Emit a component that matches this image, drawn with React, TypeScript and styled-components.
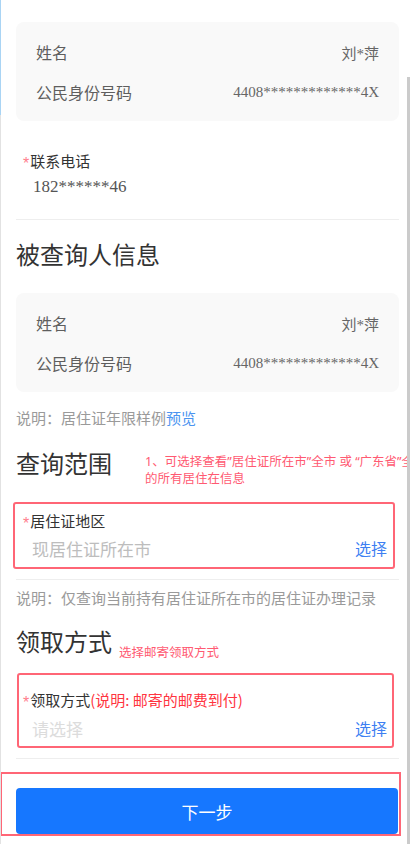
import React from "react";
import styled, { createGlobalStyle } from "styled-components";

const Global = createGlobalStyle`
  html, body { margin: 0; padding: 0; background: #fff; overflow-x: hidden; }
  body { font-family: "Noto Sans CJK SC", "Noto Sans", sans-serif; }
  * { box-sizing: border-box; }
`;

const Page = styled.div`
  width: 410px;
  overflow: hidden;
  padding: 22px 11px 9px 16px;
  display: flex;
  flex-direction: column;
`;

const EdgeLine = styled.div`
  position: fixed;
  left: 0;
  top: 0;
  bottom: 0;
  width: 1px;
  background: linear-gradient(#a9d4f4 0, #a9d4f4 115px, #e2e2e2 115px);
`;

const ScrollThumb = styled.div`
  position: fixed;
  right: 0;
  top: 77px;
  bottom: 0;
  width: 3px;
  background: #cbcbcb;
`;

const InfoCard = styled.div<{ $mt?: number }>`
  margin-top: ${(p) => p.$mt ?? 0}px;
  background: #f9f9f9;
  border-radius: 8px;
  padding: 18px 20px 17px 20px;
  display: flex;
  flex-direction: column;
  gap: 16px;
`;

const InfoRow = styled.div`
  display: flex;
  justify-content: space-between;
  align-items: center;
  height: 24px;
`;

const InfoLabel = styled.span`
  font-size: 16px;
  color: #5e5e5e;
`;

const InfoValue = styled.span`
  font-family: "Liberation Serif", "Noto Sans CJK SC", serif;
  font-size: 15px;
  color: #666;
`;

const Star = styled.span`
  color: #ff7d8c;
  font-family: "Liberation Sans", sans-serif;
  font-size: 16px;
  line-height: 16px;
  margin-right: 1px;
  position: relative;
  top: 3px;
`;

const PhoneBlock = styled.div`
  margin-top: 29px;
  padding-left: 7px;
  display: flex;
  flex-direction: column;
`;

const FieldLabel = styled.div`
  font-size: 15px;
  line-height: 22px;
  height: 22px;
  color: #333;
  display: flex;
  align-items: center;
`;

const PhoneValue = styled.div`
  font-family: "Liberation Serif", serif;
  font-size: 17px;
  line-height: 24px;
  color: #555;
  margin-top: 3px;
  padding-left: 10px;
`;

const Divider = styled.div<{ $mt: number }>`
  margin-top: ${(p) => p.$mt}px;
  height: 1px;
  background: #eeeeee;
`;

const TitleRow = styled.div<{ $mt: number; $align?: string }>`
  margin-top: ${(p) => p.$mt}px;
  height: 32px;
  display: flex;
  align-items: ${(p) => p.$align ?? "flex-start"};
`;

const Title = styled.h2`
  margin: 0;
  font-size: 24px;
  line-height: 32px;
  font-weight: 400;
  color: #333;
  white-space: nowrap;
`;

const Note = styled.div<{ $ml: number; $mt?: number; $mb?: number }>`
  margin-left: ${(p) => p.$ml}px;
  margin-top: ${(p) => p.$mt ?? 0}px;
  margin-bottom: ${(p) => p.$mb ?? 0}px;
  font-family: "Noto Sans", "Noto Sans CJK SC", sans-serif;
  font-size: 12.5px;
  line-height: 17px;
  color: #ff5a72;
  white-space: nowrap;
  flex-shrink: 0;
`;

const Hint = styled.div<{ $mt: number }>`
  margin-top: ${(p) => p.$mt}px;
  font-size: 15px;
  line-height: 22px;
  color: #9a9a9a;
`;

const Link = styled.span`
  color: #4b94f0;
`;

const MarkedField = styled.div<{
  $mt: number;
  $ml: number;
  $w: number;
  $pt: number;
  $pb: number;
  $pl: number;
  $pr: number;
  $gap: number;
}>`
  margin-top: ${(p) => p.$mt}px;
  margin-left: ${(p) => p.$ml}px;
  width: ${(p) => p.$w}px;
  border: 2px solid #ff6676;
  border-radius: 3px;
  padding: ${(p) => `${p.$pt}px ${p.$pr}px ${p.$pb}px ${p.$pl}px`};
  display: flex;
  flex-direction: column;
  gap: ${(p) => p.$gap}px;
`;

const PickRow = styled.div`
  display: flex;
  justify-content: space-between;
  align-items: center;
  height: 24px;
  padding-left: 9px;
`;

const Placeholder = styled.span<{ $light?: boolean }>`
  font-size: 17px;
  color: ${(p) => (p.$light ? "#dcdcdc" : "#bdbdbd")};
`;

const PickAction = styled.span`
  font-size: 16px;
  color: #3d7ff2;
`;

const RedText = styled.span`
  color: #ff3440;
`;

const Footer = styled.div`
  margin-top: 13px;
  margin-left: -16px;
  width: 401px;
  border: 2px solid #ff6676;
  padding: 14px 1px 0 14px;
  display: flex;
`;

const NextButton = styled.button`
  width: 382px;
  height: 46px;
  border: none;
  border-radius: 4px;
  background: #1677ff;
  color: #fff;
  font-family: "Noto Sans CJK SC", sans-serif;
  font-size: 17px;
  cursor: pointer;
`;

export default function App() {
  return (
    <>
      <Global />
      <EdgeLine />
      <ScrollThumb />
      <Page>
        <InfoCard>
          <InfoRow>
            <InfoLabel>姓名</InfoLabel>
            <InfoValue>刘*萍</InfoValue>
          </InfoRow>
          <InfoRow>
            <InfoLabel>公民身份号码</InfoLabel>
            <InfoValue>4408*************4X</InfoValue>
          </InfoRow>
        </InfoCard>

        <PhoneBlock>
          <FieldLabel>
            <Star>*</Star>联系电话
          </FieldLabel>
          <PhoneValue>182******46</PhoneValue>
        </PhoneBlock>

        <Divider $mt={20} />

        <TitleRow $mt={18}>
          <Title>被查询人信息</Title>
        </TitleRow>

        <InfoCard $mt={23}>
          <InfoRow>
            <InfoLabel>姓名</InfoLabel>
            <InfoValue>刘*萍</InfoValue>
          </InfoRow>
          <InfoRow>
            <InfoLabel>公民身份号码</InfoLabel>
            <InfoValue>4408*************4X</InfoValue>
          </InfoRow>
        </InfoCard>

        <Hint $mt={15}>
          说明：居住证年限样例<Link>预览</Link>
        </Hint>

        <TitleRow $mt={18}>
          <Title>查询范围</Title>
          <Note $ml={33} $mt={6}>
            1、可选择查看”居住证所在市”全市 或 “广东省”全省
            <br />
            的所有居住在信息
          </Note>
        </TitleRow>

        <MarkedField $mt={23} $ml={-3} $w={382} $pt={6} $pb={7} $pl={8} $pr={6} $gap={4}>
          <FieldLabel>
            <Star>*</Star>居住证地区
          </FieldLabel>
          <PickRow>
            <Placeholder>现居住证所在市</Placeholder>
            <PickAction>选择</PickAction>
          </PickRow>
        </MarkedField>

        <Divider $mt={10} />

        <Hint $mt={7}>说明：仅查询当前持有居住证所在市的居住证办理记录</Hint>

        <TitleRow $mt={16} $align="flex-end">
          <Title>领取方式</Title>
          <Note $ml={7} $mb={-4}>选择邮寄领取方式</Note>
        </TitleRow>

        <MarkedField $mt={16} $ml={1} $w={377} $pt={14} $pb={6} $pl={4} $pr={5} $gap={5}>
          <FieldLabel>
            <Star>*</Star>领取方式<RedText>(说明: 邮寄的邮费到付)</RedText>
          </FieldLabel>
          <PickRow>
            <Placeholder $light>请选择</Placeholder>
            <PickAction>选择</PickAction>
          </PickRow>
        </MarkedField>

        <Divider $mt={10} />

        <Footer>
          <NextButton>下一步</NextButton>
        </Footer>
      </Page>
    </>
  );
}
